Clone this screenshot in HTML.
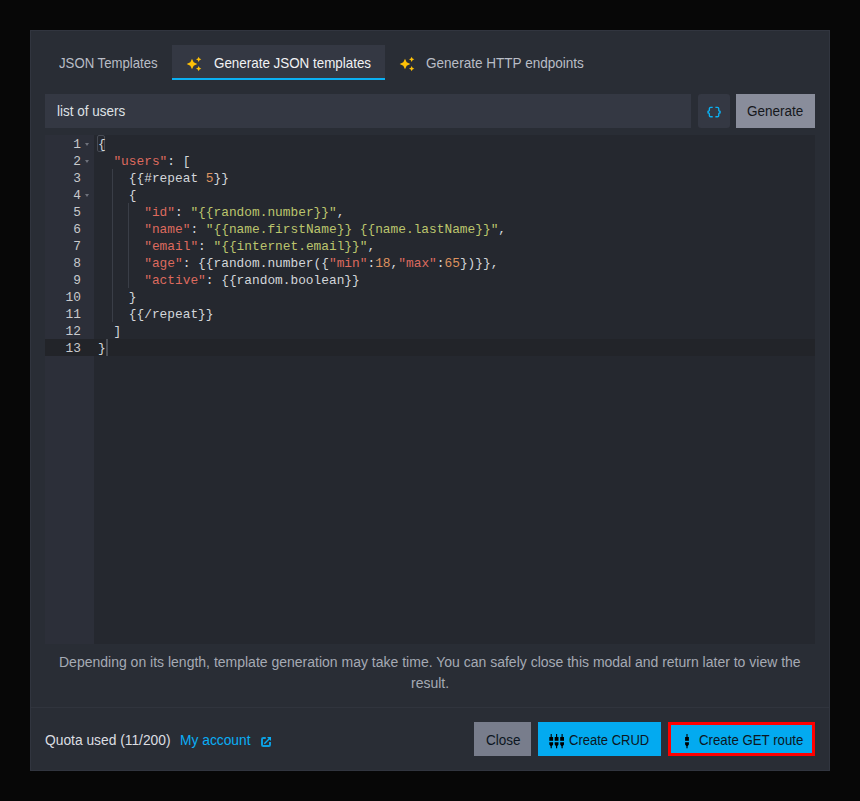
<!DOCTYPE html>
<html><head><meta charset="utf-8">
<style>
*{box-sizing:border-box;margin:0;padding:0}
html,body{width:860px;height:801px;overflow:hidden;background:#070707;font-family:"Liberation Sans",sans-serif;font-size:14px}
.a{position:absolute;white-space:nowrap}
.modal{left:30px;top:30px;width:800px;height:741px;background:#292d35;border:1px solid #31353f}
.tabbg{left:172px;top:45px;width:213px;height:35px;background:#343843;border-bottom:2px solid #0bb0f2}
.input{left:45px;top:94px;width:646px;height:34px;background:#343843}
.iconbtn{left:698px;top:94px;width:32px;height:34px;background:#343843;border-radius:3px}
.genbtn{left:736px;top:94px;width:79px;height:34px;background:#898d9b}
.editor{left:45px;top:135px;width:770px;height:509px;background:#25282f}
.gutter{left:45px;top:135px;width:49px;height:509px;background:#2c2f39}
.active{left:45px;top:339px;width:770px;height:17px;background:#222429}
.ln{position:absolute;left:44px;width:37px;text-align:right;color:#c8cacd;font-family:"Liberation Mono",monospace;font-size:12.83px;line-height:17px}
.cl{position:absolute;left:98px;white-space:pre;color:#d3d6da;font-family:"Liberation Mono",monospace;font-size:12.83px;line-height:17px}
.fold{position:absolute;left:85px;width:0;height:0;border-left:2.9px solid transparent;border-right:2.9px solid transparent;border-top:3.4px solid #6e727c}
.guide{position:absolute;width:1px;background:#3a3e47}
.k{color:#dd6a5e}.s{color:#bcc56d}.n{color:#de935f}
.divider{left:31px;top:707px;width:798px;height:1px;background:#30343d}
.btn{top:722px;height:34px;background:#03aaf0}
</style></head><body>
<div class="a modal"></div>
<div class="a tabbg"></div>
<div class="a" style="left:59px;top:54.22px;font-size:13.2px;line-height:20px;color:#b9bdc6;transform:scaleY(1.1);transform-origin:0 14.58px">JSON Templates</div>
<div class="a" style="left:186px;top:56px"><svg width="16" height="16" viewBox="0 0 24 24"><path fill="#ffc107" d="M19 9l1.25-2.75L23 5l-2.75-1.25L19 1l-1.25 2.75L15 5l2.75 1.25L19 9zm-7.5.5L9 4 6.5 9.5 1 12l5.5 2.5L9 20l2.5-5.5L17 12l-5.5-2.5zM19 15l-1.25 2.75L15 19l2.75 1.25L19 23l1.25-2.75L23 19l-2.75-1.25L19 15z"/></svg></div>
<div class="a" style="left:214px;top:54.15px;font-size:13.4px;line-height:20px;color:#f1f2f4;transform:scaleY(1.1);transform-origin:0 14.65px">Generate JSON templates</div>
<div class="a" style="left:399px;top:56px"><svg width="16" height="16" viewBox="0 0 24 24"><path fill="#ffc107" d="M19 9l1.25-2.75L23 5l-2.75-1.25L19 1l-1.25 2.75L15 5l2.75 1.25L19 9zm-7.5.5L9 4 6.5 9.5 1 12l5.5 2.5L9 20l2.5-5.5L17 12l-5.5-2.5zM19 15l-1.25 2.75L15 19l2.75 1.25L19 23l1.25-2.75L23 19l-2.75-1.25L19 15z"/></svg></div>
<div class="a" style="left:426px;top:54.10px;font-size:13.56px;line-height:20px;color:#b9bdc6;transform:scaleY(1.1);transform-origin:0 14.70px">Generate HTTP endpoints</div>
<div class="a input"></div>
<div class="a" style="left:57px;top:101.52px;font-size:13.5px;line-height:20px;color:#dfe1e5;transform:scaleY(1.02);transform-origin:0 14.68px">list of users</div>
<div class="a iconbtn"></div>
<div class="a" style="left:705.7px;top:104.2px;line-height:0"><svg width="16.1" height="16.1" viewBox="0 0 24 24"><path fill="#0bb0f2" d="M4 7v2c0 .55-.45 1-1 1H2v4h1c.55 0 1 .45 1 1v2c0 1.65 1.35 3 3 3h3v-2H7c-.55 0-1-.45-1-1v-2c0-1.3-.84-2.42-2-2.83v-.34C5.16 11.42 6 10.3 6 9V7c0-.55.45-1 1-1h3V4H7C5.35 4 4 5.35 4 7zm17 3c-.55 0-1-.45-1-1V7c0-1.65-1.35-3-3-3h-3v2h3c.55 0 1 .45 1 1v2c0 1.3.84 2.42 2 2.83v.34c-1.16.41-2 1.52-2 2.83v2c0 .55-.45 1-1 1h-3v2h3c1.65 0 3-1.35 3-3v-2c0-.55.45-1 1-1h1v-4h-1z"/></svg></div>
<div class="a genbtn"></div>
<div class="a" style="left:747px;top:101.52px;font-size:13.5px;line-height:20px;color:#15171b;transform:scaleY(1.05);transform-origin:0 14.68px">Generate</div>
<div class="a editor"></div>
<div class="a gutter"></div>
<div class="a active"></div>
<div class="a" style="left:97px;top:135px;width:8px;height:16.5px;border:1px solid #474b54;border-radius:2px"></div>
<div class="a" style="left:106px;top:339px;width:2px;height:17px;background:#4a4e56"></div>
<div class="ln" style="top:136px">1</div><div class="cl" style="top:136px">{</div><div class="ln" style="top:153px">2</div><div class="cl" style="top:153px">  <span class="k">"users"</span>: [</div><div class="ln" style="top:170px">3</div><div class="cl" style="top:170px">    {{#repeat <span class="n">5</span>}}</div><div class="ln" style="top:187px">4</div><div class="cl" style="top:187px">    {</div><div class="ln" style="top:204px">5</div><div class="cl" style="top:204px">      <span class="k">"id"</span>: <span class="s">"{{random.number}}"</span>,</div><div class="ln" style="top:221px">6</div><div class="cl" style="top:221px">      <span class="k">"name"</span>: <span class="s">"{{name.firstName}} {{name.lastName}}"</span>,</div><div class="ln" style="top:238px">7</div><div class="cl" style="top:238px">      <span class="k">"email"</span>: <span class="s">"{{internet.email}}"</span>,</div><div class="ln" style="top:255px">8</div><div class="cl" style="top:255px">      <span class="k">"age"</span>: {{random.number({<span class="k">"min"</span>:<span class="n">18</span>,<span class="k">"max"</span>:<span class="n">65</span>})}},</div><div class="ln" style="top:272px">9</div><div class="cl" style="top:272px">      <span class="k">"active"</span>: {{random.boolean}}</div><div class="ln" style="top:289px">10</div><div class="cl" style="top:289px">    }</div><div class="ln" style="top:306px">11</div><div class="cl" style="top:306px">    {{/repeat}}</div><div class="ln" style="top:323px">12</div><div class="cl" style="top:323px">  ]</div><div class="ln" style="top:340px">13</div><div class="cl" style="top:340px">}</div><div class="fold" style="top:143px"></div><div class="fold" style="top:160px"></div><div class="fold" style="top:194px"></div><div class="guide" style="left:112px;top:169px;height:153px"></div><div class="guide" style="left:128px;top:203px;height:85px"></div>
<div class="a" style="left:59px;top:651.65px;font-size:14px;line-height:20px;color:#a5aab4;transform:scaleY(1.0);transform-origin:0 14.85px">Depending on its length, template generation may take time. You can safely close this modal and return later to view the</div>
<div class="a" style="left:411px;top:672.95px;font-size:14px;line-height:20px;color:#a5aab4;transform:scaleY(1.0);transform-origin:0 14.85px">result.</div>
<div class="a divider"></div>
<div class="a" style="left:45px;top:730.92px;font-size:13.8px;line-height:20px;color:#dcdee2;transform:scaleY(1.0);transform-origin:0 14.78px">Quota used (11/200)</div>
<div class="a" style="left:180px;top:730.92px;font-size:13.8px;line-height:20px;color:#0aaef5;transform:scaleY(1.0);transform-origin:0 14.78px">My account</div>
<div class="a" style="left:260px;top:736px;line-height:0"><svg width="12" height="12" viewBox="0 0 12 12"><path fill="none" stroke="#0c9ee0" stroke-width="2" d="M5.8 2H3.2Q2 2 2 3.2V8.8Q2 10 3.2 10H8.8Q10 10 10 8.8V6"/><path fill="#0aaef5" d="M7 1H11V5Z"/><path stroke="#0aaef5" stroke-width="1.4" d="M4.3 7.7L9.6 2.4"/></svg></div>
<div class="a btn" style="left:474px;width:57px;background:#787d8c"></div>
<div class="a" style="left:486px;top:730.82px;font-size:13.5px;line-height:20px;color:#0c1622;transform:scaleY(1.05);transform-origin:0 14.68px">Close</div>
<div class="a btn" style="left:538px;width:123px"></div>
<div class="a" style="left:549.4px;top:734px;line-height:0"><svg width="16" height="15" viewBox="0 0 16 15" fill="#000"><rect x="1.6500000000000001" y="0" width="1.1" height="3.5"/><rect x="0.30000000000000027" y="3" width="3.8" height="3.8"/><path d="M0.30000000000000027 8.3H4.1V10.6L2.8000000000000003 12.2V14.2H1.6V12.2L0.30000000000000027 10.6Z"/><rect x="7.05" y="0" width="1.1" height="3.5"/><rect x="5.699999999999999" y="3" width="3.8" height="3.8"/><path d="M5.699999999999999 8.3H9.5V10.6L8.2 12.2V14.2H7.0V12.2L5.699999999999999 10.6Z"/><rect x="12.549999999999999" y="0" width="1.1" height="3.5"/><rect x="11.2" y="3" width="3.8" height="3.8"/><path d="M11.2 8.3H15.0V10.6L13.7 12.2V14.2H12.5V12.2L11.2 10.6Z"/></svg></div>
<div class="a" style="left:569px;top:730.99px;font-size:13.0px;line-height:20px;color:#0c1622;transform:scaleY(1.1);transform-origin:0 14.51px">Create CRUD</div>
<div class="a btn" style="left:668px;width:147px;border:3px solid #ff0000"></div>
<div class="a" style="left:684px;top:734px;line-height:0"><svg width="6" height="15" viewBox="0 0 6 15" fill="#000"><rect x="2.45" y="0" width="1.1" height="3.5"/><rect x="1.1" y="3" width="3.8" height="3.8"/><path d="M1.1 8.3H4.9V10.6L3.6 12.2V14.2H2.4V12.2L1.1 10.6Z"/></svg></div>
<div class="a" style="left:699px;top:730.91px;font-size:13.25px;line-height:20px;color:#0c1622;transform:scaleY(1.1);transform-origin:0 14.59px">Create GET route</div>
</body></html>
